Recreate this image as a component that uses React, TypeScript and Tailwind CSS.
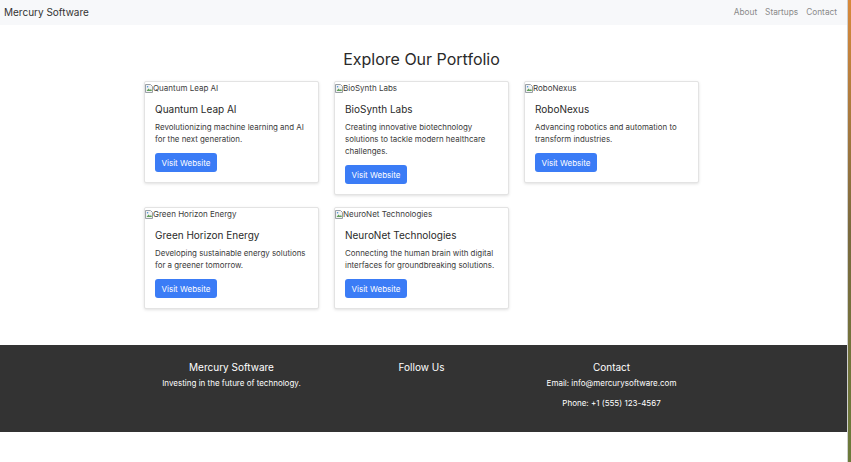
import React from "react";

interface Startup {
	name: string;
	description: string;
}

const startups: Array<Startup> = [
	{ name: "Quantum Leap AI", description: "Revolutionizing machine learning and AI for the next generation." },
	{ name: "BioSynth Labs", description: "Creating innovative biotechnology solutions to tackle modern healthcare challenges." },
	{ name: "RoboNexus", description: "Advancing robotics and automation to transform industries." },
	{ name: "Green Horizon Energy", description: "Developing sustainable energy solutions for a greener tomorrow." },
	{ name: "NeuroNet Technologies", description: "Connecting the human brain with digital interfaces for groundbreaking solutions." },
];

const BrokenImage: React.FC = () => (
	<svg width="8" height="9" viewBox="0 0 8 9" className="shrink-0">
		<path d="M0.5 0.5h5l2 2v6h-7z" fill="#f3f3f3" stroke="#9aa0a6" strokeWidth="1" />
		<path d="M1.5 7l2-2.5 1.5 1.5 1-1 1 2z" fill="#5fa05a" />
		<circle cx="2.6" cy="2.8" r="0.8" fill="#4a90d9" />
	</svg>
);

const Card: React.FC<Startup> = (props) => {
	return (
		<div className="w-[175px] bg-white border border-[#e3e3e3] rounded-[2px] shadow-[0_1px_3px_rgba(0,0,0,0.12)] self-start">
			<div className="flex items-center h-[12px] text-[8px] leading-[12px] text-[#3c3c3c]">
				<BrokenImage />
				<span>{props.name}</span>
			</div>
			<div className="px-[10px] pt-[9px] pb-[10px]">
				<h5 className="text-[10px] leading-[13px] text-[#2a2a2a] mb-[5px]">{props.name}</h5>
				<p className="text-[7.9px] leading-[12px] text-[#3a3a3a] mb-[8px]">{props.description}</p>
				<a className="flex w-fit items-center h-[19px] px-[6.5px] rounded-[3px] bg-[#3b7cf6] text-white text-[8px] leading-none">Visit Website</a>
			</div>
		</div>
	);
};

export default function App() {
	return (
		<div className="flex w-[851px] h-[462px] overflow-hidden bg-white" style={{ fontFamily: "Inter, 'Noto Sans', sans-serif" }}>
			<div className="w-[848px] flex flex-col border-r border-[#cfcfcf]">
				<nav className="h-[25px] bg-[#f7f8fa] flex items-center justify-between px-[4px]">
					<span className="text-[10px] text-[#333]">Mercury Software</span>
					<div className="flex gap-[8px] pr-[6px] text-[8.3px] text-[#8a8a8a]">
						<span>About</span>
						<span>Startups</span>
						<span>Contact</span>
					</div>
				</nav>
				<main className="flex flex-col items-center pt-[23px] pb-[36px]">
					<h2 className="text-[16px] leading-[22px] text-[#2a2a2a] mb-[11px] -ml-[4px]">Explore Our Portfolio</h2>
					<div className="grid grid-cols-[175px_175px_175px] gap-x-[15px] gap-y-[12px] -ml-[4px]">
						{startups.map((s) => (
							<Card key={s.name} name={s.name} description={s.description} />
						))}
					</div>
				</main>
				<footer className="h-[87px] bg-[#333333] text-white flex justify-center pt-[15px] -ml-[4px]">
					<div className="grid grid-cols-[190px_190px_190px] text-center">
						<div>
							<h5 className="text-[10px] leading-[14px] mb-[3px]">Mercury Software</h5>
							<p className="text-[8px] leading-[12px]">Investing in the future of technology.</p>
						</div>
						<div>
							<h5 className="text-[10px] leading-[14px]">Follow Us</h5>
						</div>
						<div>
							<h5 className="text-[10px] leading-[14px] mb-[3px]">Contact</h5>
							<p className="text-[8px] leading-[12px] mb-[8px]">Email: info@mercurysoftware.com</p>
							<p className="text-[8px] leading-[12px]">Phone: +1 (555) 123-4567</p>
						</div>
					</div>
				</footer>
				<div className="flex-1 bg-white" />
			</div>
			<div className="w-[3px] bg-gradient-to-b from-[#d8893a] via-[#7a6a3e] to-[#6b7a3a]" />
		</div>
	);
}
